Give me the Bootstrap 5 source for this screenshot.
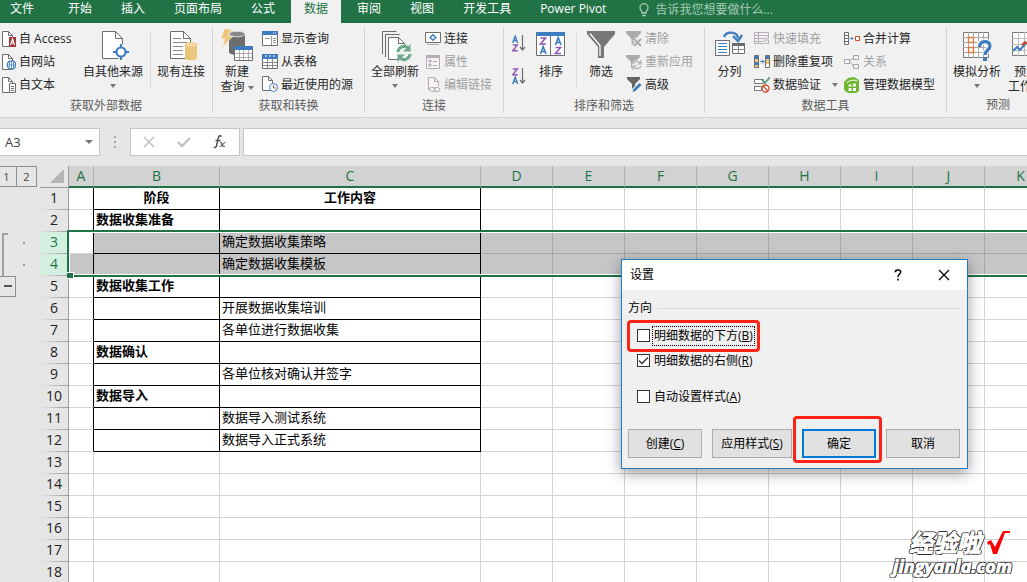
<!DOCTYPE html>
<html lang="zh-CN">
<head>
<meta charset="utf-8">
<meta name="viewport" content="width=device-width, initial-scale=1">
<title>A3</title>
<link href="https://cdn.jsdelivr.net/npm/bootstrap@5.3.0/dist/css/bootstrap.min.css" rel="stylesheet">
<style>
  body { height: 100vh; background: #e6e6e6; color: #262626; font: 12px/16px "Open Sans", "Noto Sans CJK SC", sans-serif; }
  button, input { font: inherit; color: inherit; }
  button { background: none; border: 0; padding: 0; }
  svg { display: block; flex: none; }

  /* tabs */
  .tabs { height: 23px; background: #217346; gap: 3px; }
  .tabs a { color: #fff; text-decoration: none; padding: 1px 13px 6px; height: 23px; white-space: nowrap; }
  .tabs a.file-tab { padding: 1px 18px 6px 10px; }
  .tabs a.active { background: #f1f1f1; color: #217346; }
  .tellme { color: #a6cbb5; padding: 1px 0 5px 17px; gap: 6px; white-space: nowrap; }

  /* ribbon */
  .ribbon { background: #f1f1f1; border-bottom: 1px solid #d2d2d2; padding: 4px 0; height: 95px; }
  .group { display: flex; flex: none; flex-direction: column; border-right: 1px solid #d2d2d2; height: 86px; }
  .group:last-child { border-right: 0; }
  .tools { display: grid; height: 70px; }
  .caption-line { text-align: center; color: #5c5c5c; line-height: 16px; padding-top: 2px; }
  .g-external .tools { grid-template-columns: 80px 66px 8px 54px 4px; }
  .g-transform .tools { grid-template-columns: 48px 103px; }
  .g-connect .tools { grid-template-columns: 60px 78px; }
  .g-sort .tools { grid-template-columns: 26px 42px 8px 46px 78px; }
  .g-data .tools { grid-template-columns: 49px 90px 102px; }
  .g-forecast .tools { grid-template-columns: 60px 42px; }
  .big { display: flex; flex-direction: column; align-items: center; padding-top: 3px; white-space: nowrap; line-height: 15px; }
  .big svg.pic { margin-bottom: 2px; overflow: visible; }
  .tiny { display: flex; align-items: center; gap: 3px; height: 23px; white-space: nowrap; }
  .tiny.off { color: #a0a0a0; }
  .rule { width: 1px; height: 56px; margin: 6px auto; background: #dadada; }
  .caret { display: inline-block; border: 3px solid transparent; border-top: 4px solid #777; border-bottom: 0; vertical-align: middle; }
  .big > .caret { margin-top: 5px; }

  /* formula bar */
  .fbar { height: 28px; margin: 10px 0; }
  .fbox { background: #fff; border: 1px solid #c6c6c6; }
  .namebox { width: 100px; border-left: 0; }
  .namebox input { width: 80px; padding: 0 0 0 5px; border: 0; background: none; outline: 0; color: #444; font-size: 13px; }
  .namebox .caret { border-width: 4px 4px 0; margin-left: 5px; }
  .dots { width: 30px; }
  .fbuttons { width: 110px; margin-right: 3px; }
  .formula { min-width: 0; border-right: 0; outline: 0; border-radius: 0; }

  /* outline gutter */
  .gutter { width: 40px; flex: none; }
  .lvl { height: 21px; border: 1px solid #8a8f99; color: #444; font-size: 11px; line-height: 19px; width: 21px; }
  .lvl.edge { width: 16px; border-left: 0; border-right: 0; padding-right: 3px; }
  .bracket { margin: 46px 0 0 2px; height: 43px; gap: 15px; }
  .bracket i { width: 6px; border: solid #a0a0a0; border-width: 2px 0 0 2px; }
  .bracket .pips { padding-top: 9px; }
  .pips b { display: block; width: 2px; height: 2px; background: #999; margin-bottom: 20px; }
  .fold { width: 16px; height: 21px; border: 1px solid #8a8f99; border-left: 0; }
  .fold span { display: block; width: 8px; height: 2px; margin: auto; background: #555; }

  /* sheet */
  .grid-area { min-height: 0; }
  .sheet { min-width: 0; }
  .cells { table-layout: fixed; width: 1017px; border-collapse: separate; border-spacing: 0; font-size: 13px; color: #000; background: #fff; }
  .cells th, .cells td { height: 22px; padding: 0 2px 2px; line-height: 19px; border: solid #d4d4d4; border-width: 0 1px 1px 0; overflow: hidden; white-space: nowrap; }
  .cells thead th { background: #d2d2d2; color: #217346; font-weight: 400; font-size: 14px; text-align: center; padding-bottom: 1px; border-right-color: #b1b1b1; border-bottom: 2px solid #217346; }
  .cells thead th.corner { background: #e6e6e6; border-bottom: 1px solid #9b9b9b; border-right-color: #9b9b9b; padding: 0; }
  .cells tbody th { background: linear-gradient(90deg, #e6e6e6, #9b9b9b) bottom / 100% 1px no-repeat #e6e6e6; border-right-color: #9b9b9b; border-bottom: 0; font-size: 14px; font-weight: 400; text-align: center; color: #222; }
  .cells tbody tr.sel th { background-color: #d3f0e0; color: #217346; }
  .cells tr.sel td { background: #c6c6c6; border-color: #a6a6a6; }
  .cells tr.sel td.current { background: #fff; border-bottom-color: #d4d4d4; }
  .cells td.edge-r { border-right-color: #000 !important; }
  .cells td.edge-b { border-bottom-color: #000 !important; }
  .cells td.strong { font-weight: 700; }
  .marquee { position: absolute; left: 27px; right: -4px; top: 64px; height: 47px; border: 2px solid #217346; box-shadow: inset 0 0 0 1px #fff; }
  .marquee::after { content: ""; position: absolute; left: -2px; bottom: -4px; width: 7px; height: 7px; background: #217346; border: solid #fff; border-width: 1px 1px 1px 0; }

  /* dialog */
  .dlg { position: absolute; left: 621px; top: 259px; width: 347px; background: #f0f0f0; border: 1px solid #1f7bc4; box-shadow: 0 4px 14px rgba(0,0,0,.4); color: #000; }
  .dlg-head { height: 30px; background: #fff; padding: 0 17px 0 8px; }
  .dlg-body { padding: 10px 7px 10px 6px; }
  .dlg fieldset { padding: 7px 0 0 9px; }
  .section { gap: 5px; }
  .section hr { flex: 1; margin: 0; border-color: #999; }
  .opt { display: flex; align-items: center; gap: 2px; height: 25px; position: relative; width: max-content; }
  .opt.apart { margin-top: 11px; }
  .opt input { appearance: none; width: 13px; height: 13px; margin: 0; border: 1px solid #333; background: #fff; }
  .opt input:checked { background: #fff url("data:image/svg+xml,%3Csvg xmlns='http://www.w3.org/2000/svg' viewBox='0 0 11 11'%3E%3Cpath d='M1 5.5 4 8.5 10 2.5' fill='none' stroke='%23333' stroke-width='1.3'/%3E%3C/svg%3E"); }
  .opt label { border: 1px solid transparent; padding: 1px; line-height: 16px; }
  .opt label.focused { border: 1px dotted #000; }
  .callout::after { content: ""; position: absolute; border: 3px solid #fb2416; border-radius: 4px; pointer-events: none; }
  .opt.callout::after { inset: -3px -5px -4px -10px; }
  .actions { gap: 10px; margin-top: 20px; }
  .act { position: relative; height: 29px; flex: 1 1 74px; background: #e1e1e1; border: 1px solid #adadad; white-space: nowrap; }
  .act.wide { flex-basis: 80px; }
  .act.main { border: 2px solid #0078d7; }
  .act.callout::after { inset: -15px -8px -7px -11px; }

  /* site mark */
  .site { position: absolute; right: 15px; bottom: 6px; color: #fff; font-weight: 700; font-style: italic; text-align: center; white-space: nowrap; -webkit-text-stroke: 1px #fff;
    text-shadow: 1px 0 #111, -1px 0 #111, 0 1px #111, 0 -1px #111, 1px 1px #111, -1px -1px #111, 1px -1px #111, -1px 1px #111; }
  .site .cn { font-size: 24px; line-height: 24px; gap: 4px; padding-left: 16px; }
  .site .en { font-size: 18px; line-height: 20px; }
</style>
</head>
<body class="d-flex flex-column overflow-hidden position-relative m-0">

<nav class="tabs d-flex">
  <a href="#" class="file-tab">文件</a><a href="#">开始</a><a href="#">插入</a><a href="#">页面布局</a><a href="#">公式</a><a href="#" class="active">数据</a><a href="#">审阅</a><a href="#">视图</a><a href="#">开发工具</a><a href="#">Power Pivot</a>
  <span class="tellme d-flex align-items-center">
    <svg width="10" height="14" viewBox="0 0 10 14" fill="none" stroke="#a6cbb5" stroke-width="1.3"><path d="M3 10V8.500C1.500 7.500 1 6 1 4.700a4 4 0 0 1 8 0C9 6 8.500 7.500 7 8.500V10zM3.200 12.500h3.600"/></svg>
    告诉我您想要做什么...</span>
</nav>

<div class="ribbon d-flex overflow-hidden">
  <section class="group g-external">
    <div class="tools">
      <div class="ps-0">
        <button class="tiny"><svg width="16" height="18" viewBox="0 0 16 18"><path d="M2.500 1.500h6l4 4v11h-10z" fill="#fff" stroke="#6d6d6d"/><path d="M8.500 1.500v4h4" fill="none" stroke="#6d6d6d"/><path d="M9 7h7v10H9z" fill="#a4373a"/><path d="M10.500 15 12.500 9l2 6M11 13h3" fill="none" stroke="#fff" stroke-width="1.200"/></svg>自 Access</button>
        <button class="tiny"><svg width="16" height="18" viewBox="0 0 16 18"><path d="M2.500 1.500h6l4 4v11h-10z" fill="#fff" stroke="#6d6d6d"/><path d="M8.500 1.500v4h4" fill="none" stroke="#6d6d6d"/><circle cx="11.500" cy="12" r="4.200" fill="#fff" stroke="#3f7cbf" stroke-width="1.300"/><path d="M7.500 12h8M11.500 8v8M9.500 9v6M13.500 9v6" stroke="#3f7cbf" fill="none" stroke-width=".8"/></svg>自网站</button>
        <button class="tiny"><svg width="16" height="18" viewBox="0 0 16 18"><path d="M2.500 1.500h6l4 4v11h-10z" fill="#fff" stroke="#6d6d6d"/><path d="M8.500 1.500v4h4" fill="none" stroke="#6d6d6d"/><path d="M9.500 7.500h6v9h-6z" fill="#fff" stroke="#6d6d6d"/><path d="M11 10.500h3M11 12.500h3M11 14.500h3" stroke="#6d6d6d"/></svg>自文本</button>
      </div>
      <button class="big"><svg class="pic" width="32" height="32" viewBox="0 0 32 32"><path d="M5.500 1.500h13l7 7v20h-20z" fill="#fff" stroke="#6d6d6d"/><path d="M18.500 1.500v7h7" fill="none" stroke="#6d6d6d"/><path d="M24 14v16M16 22h16" stroke="#f1f1f1" stroke-width="5"/><path d="M24 14v16M16 22h16" stroke="#3f7cbf" stroke-width="2"/><circle cx="24" cy="22" r="4.500" fill="#fff" stroke="#3f7cbf" stroke-width="2.200"/></svg>自其他来源<span class="caret"></span></button>
      <div class="rule"></div>
      <button class="big"><svg class="pic" width="32" height="32" viewBox="0 0 32 32"><path d="M5.500 1.500h13l7 7v20h-20z" fill="#fff" stroke="#6d6d6d"/><path d="M18.500 1.500v7h7" fill="none" stroke="#6d6d6d"/><path d="M8 8.500h8M8 12.500h14M8 16.500h10M8 20.500h10M8 24.500h10" stroke="#8a8a8a"/><path d="M20 15v13c0 3 12 3 12 0V15z" fill="#ecc67a"/><ellipse cx="26" cy="15" rx="6" ry="2.300" fill="#f5dba5" stroke="#ecc67a"/></svg>现有连接</button>
    </div>
    <div class="caption-line">获取外部数据</div>
  </section>

  <section class="group g-transform">
    <div class="tools">
      <button class="big"><svg class="pic" width="32" height="32" viewBox="0 0 32 32"><path d="M8 4v18c0 4 16 4 16 0V4z" fill="#6d6d6d"/><ellipse cx="16" cy="4" rx="8" ry="2.800" fill="#888" stroke="#ddd"/><path d="M3-1h8L7 6h5L1 18l3-9H0z" fill="#ecc67a" stroke="#f1f1f1" stroke-width=".6"/><path d="M13.500 16.500h18v14h-18z" fill="#fff" stroke="#6d6d6d"/><path d="M13 16h19v4H13z" fill="#3f7cbf"/><path d="M14 23.500h17M14 27.500h17M18.500 20v10M22.500 20v10M27.500 20v10" stroke="#aaa"/></svg>新建<span>查询 <i class="caret"></i></span></button>
      <div class="ms-auto" style="width:102px">
        <button class="tiny"><svg width="16" height="16" viewBox="0 0 16 16"><path d="M.5.5h15v14H.5z" fill="#fff" stroke="#6d6d6d"/><path d="M0 0h16v4H0z" fill="#3f7cbf"/><path d="M11 2h1M13 2h1" stroke="#fff"/><path d="M9.500 5v9M3 7.500h5M11 7.500h3M11 9.500h3M11 11.500h3" stroke="#999"/></svg>显示查询</button>
        <button class="tiny"><svg width="16" height="16" viewBox="0 0 16 16"><path d="M.5.5h15v14H.5z" fill="#fff" stroke="#6d6d6d"/><path d="M0 0h16v5H0z" fill="#3f7cbf"/><path d="M3 2h2M7 2h2M11 2h2" stroke="#fff"/><path d="M1 8.500h14M1 11.500h14M5.500 5v9M10.500 5v9" stroke="#888"/></svg>从表格</button>
        <button class="tiny"><svg width="16" height="17" viewBox="0 0 16 17"><path d="M.5.500h6l4 4v10H.5z" fill="#fff" stroke="#6d6d6d"/><path d="M6.500.500v4h4" fill="none" stroke="#6d6d6d"/><circle cx="11.500" cy="11.500" r="4" fill="#fff" stroke="#3f7cbf"/><path d="M11.500 9v3H14" fill="none" stroke="#6d6d6d"/></svg>最近使用的源</button>
      </div>
    </div>
    <div class="caption-line">获取和转换</div>
  </section>

  <section class="group g-connect">
    <div class="tools">
      <button class="big"><svg class="pic" width="32" height="32" viewBox="0 0 32 32" fill="none" stroke="#6d6d6d"><path d="M3.500 24V1.500h14M6.500 27V4.500h14"/><path d="M9.500 7.500h10l6 6v16h-16z" fill="#fff"/><path d="M19.500 7.500v6h6"/><circle cx="25" cy="23" r="8" fill="#f1f1f1" stroke="none"/><path d="M19 22a6 6 0 0 1 10-4M31 24a6 6 0 0 1-10 4" stroke="#6fa98c" stroke-width="3"/><path d="M31.500 14v7.500H24zM18.500 32v-7.500H26z" fill="#6fa98c" stroke="none"/></svg>全部刷新<span class="caret"></span></button>
      <div>
        <button class="tiny"><svg width="16" height="16" viewBox="0 0 16 16"><path d="M.5 1.500h15v10H.5z" fill="#fff" stroke="#6d6d6d"/><path d="M2 13.500h12" stroke="#aaa"/><path d="m8 3.700 2.800 2.800L8 9.300 5.200 6.500z" fill="#fff" stroke="#3f7cbf" stroke-width="1.500"/></svg>连接</button>
        <button class="tiny off"><svg width="16" height="16" viewBox="0 0 16 16"><path d="M1.500 1.500h13v13h-13z" fill="#f7f4f7" stroke="#b5adb5"/><path d="M1 1h14v3H1z" fill="#b5adb5"/><path d="M4 6h2v2H4zM4 10h2v2H4z" fill="none" stroke="#aaa"/><path d="M8 7.500h4M8 11.500h4" stroke="#aaa"/></svg>属性</button>
        <button class="tiny off"><svg width="16" height="16" viewBox="0 0 16 16" fill="none" stroke="#b0a8b0"><path d="M3.500 13V.5h6l4 4V9" fill="#f8f4f8"/><path d="M9.500.5v4h4"/><rect x="4.500" y="10.500" width="5.500" height="4" rx="2"/><rect x="9" y="10.500" width="5.500" height="4" rx="2"/></svg>编辑链接</button>
      </div>
    </div>
    <div class="caption-line">连接</div>
  </section>

  <section class="group g-sort">
    <div class="tools">
      <div class="d-flex flex-column align-items-end pe-1 pt-2 gap-3">
        <button aria-label="升序"><svg width="14" height="17" viewBox="0 0 14 17" fill="none" stroke-width="1.400"><path d="M.7 8 3.200 1l2.500 7M1.500 5.500h3.400" stroke="#3f7cbf"/><path d="M.8 10h4.600L.8 15.700h5" stroke="#9257b0"/><path d="M10.500 0v15M8 12l2.500 3 2.500-3" stroke="#6d6d6d" stroke-width="1.200"/></svg></button>
        <button aria-label="降序"><svg width="14" height="17" viewBox="0 0 14 17" fill="none" stroke-width="1.400"><path d="M.8 1h4.600L.8 6.700h5" stroke="#9257b0"/><path d="M.7 16 3.200 9l2.500 7M1.500 13.500h3.400" stroke="#3f7cbf"/><path d="M10.500 0v15M8 12l2.500 3 2.500-3" stroke="#6d6d6d" stroke-width="1.200"/></svg></button>
      </div>
      <button class="big"><svg class="pic" width="30" height="32" viewBox="0 0 30 32" fill="none" stroke-width="1.600"><path d="M.5 2.500h28v23H.5z" fill="#fff" stroke="#6d6d6d" stroke-width="1"/><path d="M0 2h29v4H0z" fill="#3f7cbf"/><path d="M14.500 6v19" stroke="#6d6d6d" stroke-width="1"/><path d="M4.500 8h5l-5 6H10M19.500 17.500h5l-5 6H25" stroke="#9257b0"/><path d="m4.500 24 2.700-7.500L10 24M5.500 21.500h3.500M19.500 15l2.700-7.500L25 15M20.500 12.500H24" stroke="#3f7cbf"/></svg>排序</button>
      <div class="rule"></div>
      <button class="big pe-1"><svg class="pic" width="28" height="32" viewBox="0 0 28 32"><path d="M0 1h28v3L17 17v11h-6V17L0 4z" fill="#767676"/><path d="M3 3.500 13 15.500V26" stroke="#fff" stroke-width="1.300" fill="none"/></svg>筛选</button>
      <div>
        <button class="tiny off"><svg width="16" height="16" viewBox="0 0 16 16"><path d="M0 0h15v2L9.500 8v6h-4V8L0 2z" fill="#ababab"/><path d="m8 8 7 7M15 8l-7 7" stroke="#f1f1f1" stroke-width="4"/><path d="m8 8 7 7M15 8l-7 7" stroke="#aaa" stroke-width="1.800"/></svg>清除</button>
        <button class="tiny off"><svg width="16" height="16" viewBox="0 0 16 16"><path d="M0 1h14v2L9 8v6H5V8L0 3z" fill="#ababab"/><circle cx="11" cy="11" r="5" fill="#f1f1f1"/><path d="M7 10a4 4 0 0 1 7-1M15 12a4 4 0 0 1-7 1M15 6v4h-4M7 16v-4h4" fill="none" stroke="#aaa" stroke-width="1.200"/></svg>重新应用</button>
        <button class="tiny"><svg width="16" height="16" viewBox="0 0 16 16"><path d="M1 0h13v2L9 7v6H6V7L1 2z" fill="#666"/><path d="M6 15.500 15 6.500" stroke="#f1f1f1" stroke-width="5"/><path d="m6.500 15 1-3 6-6 2 2-6 6z" fill="#3f7cbf"/></svg>高级</button>
      </div>
    </div>
    <div class="caption-line">排序和筛选</div>
  </section>

  <section class="group g-data">
    <div class="tools">
      <button class="big"><svg class="pic" width="32" height="32" viewBox="0 0 32 32" fill="none"><path d="M1.500 10.500h14v15h-14z" fill="#fff" stroke="#6d6d6d"/><path d="M4 13.500h9M4 16.500h9M4 19.500h9M4 22.500h9" stroke="#3f7cbf"/><path d="M18.500 13.500h12v10h-12z" fill="#fff" stroke="#6d6d6d"/><path d="M18 13h13v3H18z" fill="#6d6d6d"/><path d="M19 19.500h11M24.500 16v7" stroke="#888"/><path d="M10 7c2-6 13-6 14 1" stroke="#3f7cbf" stroke-width="2.400"/><path d="m19 6 5 5 4-6" stroke="#3f7cbf" stroke-width="2.400"/></svg>分列</button>
      <div>
        <button class="tiny off"><svg width="16" height="16" viewBox="0 0 16 16" fill="none" stroke="#b5adb5"><path d="M.5 1.500h14v11H.5z" fill="#f8f4f8"/><path d="M1 4.500h13M1 7.500h13M1 10.500h10M4.500 2v10"/><path d="M14 6h-3l-2 4h2l-2 5 6-7h-3z" fill="#d0c8d0" stroke="#f1f1f1" stroke-width=".6"/></svg>快速填充</button>
        <button class="tiny"><svg width="16" height="16" viewBox="0 0 16 16"><path d="M.5 1.500h4v12h-4zM11.500 1.500h4v12h-4z" fill="#ecc67a" stroke="#6d6d6d"/><path d="M1 2h3v3H1zM1 8h3v3H1zM12 2h3v3h-3z" fill="#3f7cbf"/><path d="M12 10h3v3h-3z" fill="#fff"/><path d="M6 7.500h4M8 5.500l2 2-2 2" fill="none" stroke="#3f7cbf"/></svg>删除重复项</button>
        <button class="tiny"><svg width="16" height="16" viewBox="0 0 16 16" fill="none"><path d="M.5 2.500h9v4h-9zM.5 9.500h7v4h-7z" fill="#fff" stroke="#777"/><path d="m8 3 3 3 5-6" stroke="#5d9c7c" stroke-width="1.800"/><circle cx="11.500" cy="11.500" r="3.500" fill="#fff" stroke="#d24726" stroke-width="1.300"/><path d="m9 9 5 5" stroke="#d24726" stroke-width="1.300"/></svg>数据验证<i class="caret ms-2"></i></button>
      </div>
      <div>
        <button class="tiny"><svg width="16" height="16" viewBox="0 0 16 16" fill="none"><path d="M.5 1.500h4v12h-4zM.5 4.500h4M.5 7.500h4M.5 10.500h4" fill="#fff" stroke="#6d6d6d"/><path d="M6 7.500h3M7.500 6 9 7.500 7.500 9" stroke="#3f7cbf"/><path d="M11.500 5.500h4v4h-4z" fill="#fff" stroke="#d24726"/></svg>合并计算</button>
        <button class="tiny off"><svg width="16" height="16" viewBox="0 0 16 16" fill="none" stroke="#a8a2a8"><path d="M5 7.500 10 3.500M5 7.500l5 5"/><path d="M.5 5.500h5v4h-5zM9.500 1.500h5v4h-5zM9.500 10.500h5v4h-5z" fill="#f8f4f8"/></svg>关系</button>
        <button class="tiny"><svg width="16" height="16" viewBox="0 0 16 16" fill="none"><path d="M0 5 4 1l6-1 5 3v11l-3 2H4l-4-3z" fill="#6eb52f"/><path d="M2.500 6C5 3 11 2.500 13.500 4" stroke="#fff"/><path d="M4.500 7.500h3v2h-3zM9 6.500h3v3H9zM4.500 11h3v3h-3zM9 11h3v3H9z" fill="#fff"/></svg>管理数据模型</button>
      </div>
    </div>
    <div class="caption-line">数据工具</div>
  </section>

  <section class="group g-forecast">
    <div class="tools">
      <button class="big"><svg class="pic" width="30" height="32" viewBox="0 0 30 32" fill="none"><path d="M1.500 2.500h25v25h-25z" fill="#fff" stroke="#777"/><path d="M1 7.500h26M1 12.500h26M1 17.500h26M1 22.500h26M6.500 2v26M11.500 2v26M16.500 2v26M21.500 2v26" stroke="#a8a8a8"/><path d="M6.500 7.500h5v5h-5zM6.500 17.500h5v5h-5z" fill="#fff" stroke="#dd7e3b" stroke-width="1.400"/><path d="M17 17c0-7 11-7 11-1 0 4-5 4-5 9" stroke="#f1f1f1" stroke-width="6"/><path d="M17.500 17c0-7 10.500-7 10.500-1 0 4-5 4-5 9" stroke="#3f7cbf" stroke-width="3.200"/><path d="M21 27.500h4v3.500h-4z" fill="#3f7cbf"/></svg>模拟分析<span class="caret"></span></button>
      <button class="big pe-1"><svg class="pic" width="30" height="32" viewBox="0 0 30 32" fill="none"><path d="M1.500 2.500h27v23h-27z" fill="#fff" stroke="#777"/><path d="M1 8.500h27M1 14.500h27M1 20.500h27M7.500 2v24M13.500 2v24" stroke="#bbb"/><path d="m2 21 4-4 3 3 6-7" stroke="#3f7cbf" stroke-width="2.200"/><path d="m11 15 3-3 3 2 5-6" stroke="#d24726" stroke-width="2"/></svg>预测<span>工作表</span></button>
    </div>
    <div class="caption-line">预测</div>
  </section>
</div>

<div class="fbar d-flex">
  <div class="fbox namebox d-flex align-items-center"><input value="A3" aria-label="名称框"><i class="caret"></i></div>
  <div class="dots d-flex align-items-center justify-content-center"><svg width="2" height="12" viewBox="0 0 2 12"><path d="M0 1h2M0 6h2M0 11h2" stroke="#a6a6a6" stroke-width="2"/></svg></div>
  <div class="fbox fbuttons d-flex align-items-center justify-content-between ps-2 pe-2">
    <button class="ms-1" aria-label="取消输入"><svg width="12" height="12" viewBox="0 0 12 12"><path d="m1 1 10 10M11 1 1 11" stroke="#c0c0c0" stroke-width="1.600"/></svg></button>
    <button aria-label="输入"><svg width="14" height="12" viewBox="0 0 14 12"><path d="m1 6 4 4 8-8" fill="none" stroke="#c0c0c0" stroke-width="2.400"/></svg></button>
    <button class="me-1" aria-label="插入函数"><svg width="14" height="16" viewBox="0 0 14 16" fill="none" stroke="#555"><path d="M8.500 2.500C7.500 1 5.800 1.500 5.300 4L3.600 11.500c-.4 2-1.600 2.500-2.800 1.500M2.500 6.500h5" stroke-width="1.500"/><path d="M7 8.500c2-1 2 4 3.500 4h1.500M12.500 8.500C11 8 9 12.500 6.500 12.500" stroke-width="1.200"/></svg></button>
  </div>
  <input class="fbox formula flex-fill" aria-label="编辑栏">
</div>

<main class="grid-area d-flex flex-fill overflow-hidden">
  <div class="gutter">
    <div class="d-flex"><button class="lvl edge">1</button><button class="lvl">2</button></div>
    <div class="bracket d-flex"><i></i><div class="pips"><b></b><b></b></div></div>
    <button class="fold d-block" aria-label="折叠"><span></span></button>
  </div>
  <div class="sheet flex-fill overflow-hidden position-relative">
    <table class="cells">
      <colgroup><col style="width:29px"><col style="width:25px"><col style="width:126px"><col style="width:261px"><col span="8" style="width:72px"></colgroup>
      <thead><tr><th class="corner"><svg class="ms-auto me-1" width="14" height="14" viewBox="0 0 14 14"><path d="M14 0v14H0z" fill="#b4b4b4"/></svg></th><th>A</th><th>B</th><th>C</th><th>D</th><th>E</th><th>F</th><th>G</th><th>H</th><th>I</th><th>J</th><th>K</th></tr></thead>
      <tbody id="rows"></tbody>
    </table>
    <div class="marquee"></div>
  </div>
</main>

<div class="dlg" role="dialog" aria-label="设置">
  <div class="dlg-head d-flex align-items-center">
    <span class="me-auto">设置</span>
    <button class="me-4 px-2" aria-label="帮助"><svg width="8" height="12" viewBox="0 0 8 12" fill="none" stroke="#000" stroke-width="1.500"><path d="M1.200 3.200C1.200.2 6.700.2 6.700 3 6.700 5 4 5 4 8"/><path d="M4 9.500v2"/></svg></button>
    <button class="ms-1" aria-label="关闭"><svg width="12" height="12" viewBox="0 0 12 12"><path d="m1 1 10 10M11 1 1 11" stroke="#000" stroke-width="1.200"/></svg></button>
  </div>
  <div class="dlg-body">
    <div class="section d-flex align-items-center"><span>方向</span><hr></div>
    <fieldset>
      <div class="opt callout"><input type="checkbox" id="below"><label for="below" class="focused">明细数据的下方(<u>B</u>)</label></div>
      <div class="opt"><input type="checkbox" id="right" checked><label for="right">明细数据的右侧(<u>R</u>)</label></div>
      <div class="opt apart"><input type="checkbox" id="auto"><label for="auto">自动设置样式(<u>A</u>)</label></div>
    </fieldset>
    <div class="actions d-flex">
      <button class="act">创建(<u>C</u>)</button>
      <button class="act wide">应用样式(<u>S</u>)</button>
      <button class="act main callout">确定</button>
      <button class="act">取消</button>
    </div>
  </div>
</div>

<div class="site">
  <div class="cn d-flex align-items-center">经验啦<svg width="26" height="26" viewBox="0 0 26 26"><path d="M2 12 6 10l4 7L18 1h7v2h-5L12 24H8L5 14l-2 1z" fill="#f00"/></svg></div>
  <div class="en">jingyanla.com</div>
</div>

<script src="https://cdn.jsdelivr.net/npm/bootstrap@5.3.0/dist/js/bootstrap.bundle.min.js"></script>
<script>
  const stages = { 1: '阶段', 2: '数据收集准备', 5: '数据收集工作', 8: '数据确认', 10: '数据导入' };
  const tasks = { 1: '工作内容', 3: '确定数据收集策略', 4: '确定数据收集模板', 6: '开展数据收集培训', 7: '各单位进行数据收集', 9: '各单位核对确认并签字', 11: '数据导入测试系统', 12: '数据导入正式系统' };
  let html = '';
  for (let r = 1; r <= 18; r++) {
    const framed = r <= 12, sel = r === 3 || r === 4;
    const box = framed ? 'edge-r edge-b' : '';
    const center = r === 1 ? ' text-center strong' : '';
    html += `<tr class="${sel ? 'sel' : ''}"><th scope="row">${r}</th>` +
      `<td class="${framed ? 'edge-r' : ''}${r === 3 ? ' current' : ''}"></td>` +
      `<td class="strong ${box}${center}">${stages[r] || ''}</td>` +
      `<td class="${box}${center}">${tasks[r] || ''}</td>` + '<td></td>'.repeat(8) + '</tr>';
  }
  document.getElementById('rows').innerHTML = html;
</script>
</body>
</html>
